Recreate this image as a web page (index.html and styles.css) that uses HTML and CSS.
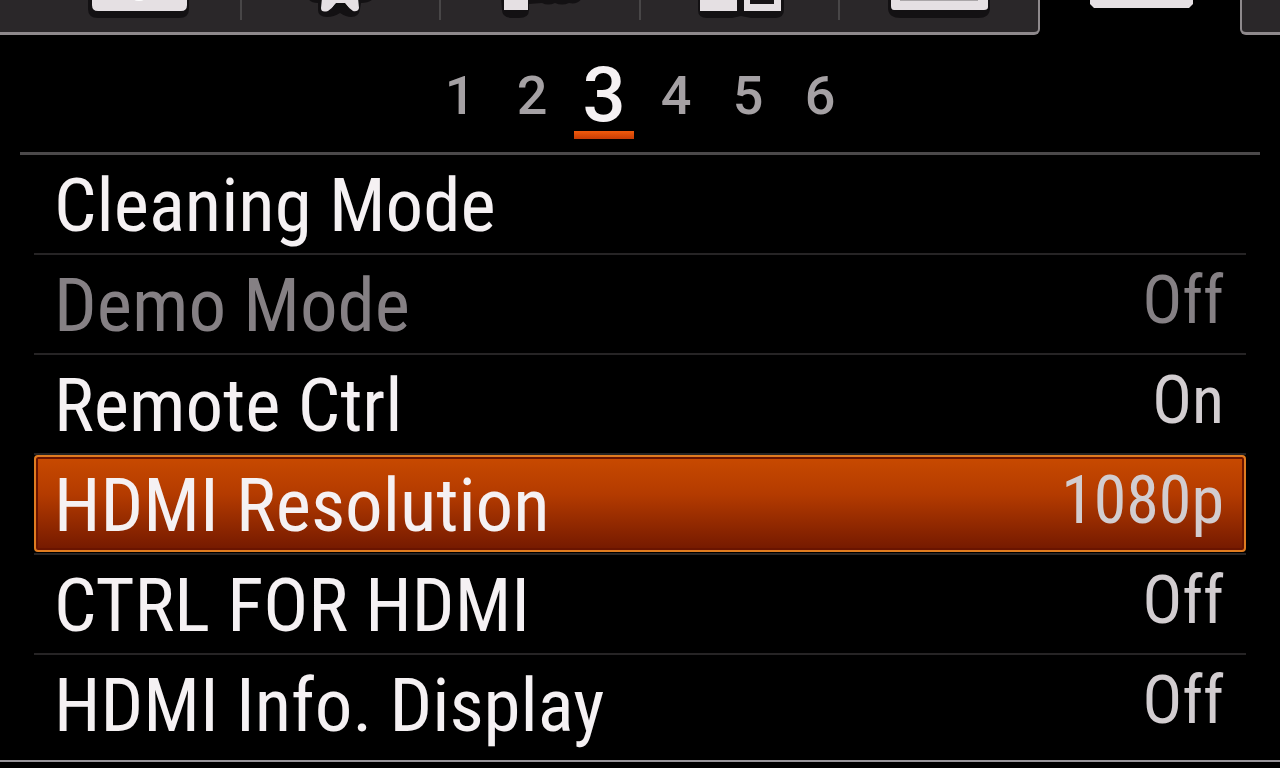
FILE: index.html
```html
<!DOCTYPE html>
<html lang="en">
<head>
<meta charset="utf-8">
<meta name="viewport" content="width=device-width, initial-scale=1">
<title>Setup Menu</title>
<link rel="stylesheet" href="styles.css">
</head>
<body>
<header class="tabs" aria-label="Menu categories">
  <div class="tabs-group tabs-before">
    <span class="tab-edge"></span>
    <button class="tab" aria-label="Camera"><svg class="icon" width="120" height="24" viewBox="0 0 120 24"><path class="shade" d="M8-5H109V9Q109 18 99 18H18Q8 18 8 9Z"/><path class="fill" d="M12-5H107V5Q107 11 101 11H18Q12 11 12 5Z"/><ellipse cx="59" cy="-1" rx="5" ry="2" fill="#fff"/></svg></button>
    <button class="tab" aria-label="Custom"><svg class="icon" width="120" height="24" viewBox="0 0 120 24"><path class="shade" d="M28-2H94Q90 3 81 3L80 9Q79 17 71 17 66 17 60 13 54 17 47 17 38 17 38 10L38 3Q30 3 28-2Z"/><path class="fill" d="M42-2H78L79 8Q78 12 73 11L68 7Q65 3 60 3 55 3 53 7L48 11Q41 13 41 8Z"/><path d="M56 3H65L69 8Q60 6 52 8Z" fill="#111"/></svg></button>
    <button class="tab" aria-label="Wireless"><svg class="icon" width="120" height="24" viewBox="0 0 120 24"><path class="shade" d="M21-2H102Q98 5 89 3 82 6 75 3 68 6 62 3L49 4V10Q49 18 39 18H33Q22 18 22 10Z"/><path class="fill" d="M24-2H48V10H24Z"/></svg></button>
    <button class="tab" aria-label="Application"><svg class="icon" width="120" height="24" viewBox="0 0 120 24"><path class="shade" d="M18-2H104V10Q104 17 96 18H71L61 16 52 18H27Q18 18 18 10Z"/><path class="fill" d="M20-2H57V11H20ZM64-2H101V11H64Z"/><path d="M70-2H94V4H70Z" fill="#171416"/></svg></button>
    <button class="tab" aria-label="Playback"><svg class="icon" width="120" height="24" viewBox="0 0 120 24"><path class="shade" d="M9-2H111V8Q111 18 99 18H22Q9 18 9 8Z"/><path class="fill" d="M12-2H109V7Q109 10 105 10H15Q12 10 12 6Z"/><path d="M21 0H99" stroke="#aaa6a8" stroke-width="2"/></svg></button>
  </div>
  <div class="tab-current">
    <button class="tab" aria-label="Setup" aria-current="true"><svg class="icon" width="120" height="24" viewBox="0 0 120 24"><path class="fill" d="M10-2H113V4L109 8H14L10 4Z"/></svg></button>
  </div>
  <div class="tabs-after"></div>
</header>
<nav class="pages" aria-label="Pages">
  <button class="page">1</button>
  <button class="page">2</button>
  <button class="page page-current" aria-current="page">3</button>
  <button class="page">4</button>
  <button class="page">5</button>
  <button class="page">6</button>
</nav>
<main class="menu">
  <ul class="list">
    <li class="item"><button class="row"><span class="name">Cleaning Mode</span></button></li>
    <li class="item"><button class="row" disabled><span class="name">Demo Mode</span><span class="value">Off</span></button></li>
    <li class="item"><button class="row"><span class="name">Remote Ctrl</span><span class="value">On</span></button></li>
    <li class="item"><button class="row row-selected"><span class="name">HDMI Resolution</span><span class="value">1080p</span></button></li>
    <li class="item"><button class="row"><span class="name">CTRL FOR HDMI</span><span class="value">Off</span></button></li>
    <li class="item"><button class="row"><span class="name">HDMI Info. Display</span><span class="value">Off</span></button></li>
  </ul>
</main>
</body>
</html>
```
FILE: styles.css
```css
* {
  box-sizing: border-box;
}

body {
  margin: 0;
  background: #000;
  color: #f5f1f3;
  font-family: "Liberation Sans Narrow", "Roboto Condensed", "Liberation Sans", sans-serif;
}

button {
  margin: 0;
  padding: 0;
  border: 0;
  background: none;
  color: inherit;
  font: inherit;
}

.tabs {
  display: grid;
  grid-template-columns: 26fr 5fr 1fr;
  height: 35px;
  overflow: hidden;
}

.tabs-group {
  display: grid;
  grid-template-columns: 1fr repeat(5, 5fr);
  border: solid #8e898c;
  border-width: 0 2px 3px 0;
  border-radius: 0 0 6px 0;
  background: #2a2729;
}

.tab {
  display: flex;
  justify-content: center;
  width: 100%;
  height: 20px;
}

.tabs-group .tab + .tab {
  border-left: 2px solid #484647;
}

.tabs-after {
  border: solid #8e898c;
  border-width: 0 0 3px 2px;
  border-radius: 0 0 0 6px;
  background: #2a2729;
}

.icon {
  flex: none;
}

.fill {
  fill: #e5e0e3;
}

.shade {
  fill: #131113;
}

.pages {
  display: flex;
  justify-content: center;
  height: 117px;
  padding-top: 25px;
  font-family: Roboto, "Liberation Sans", sans-serif;
  font-weight: 500;
}

.page {
  display: flex;
  flex-direction: column;
  align-items: center;
  width: 72px;
  height: 80px;
  color: #a5a1a4;
  font-size: 54px;
  line-height: 72px;
}

.page-current {
  color: #f5f1f3;
  font-size: 76px;
  line-height: 71px;
}

.page-current::after {
  content: "";
  flex: none;
  width: 60px;
  height: 8px;
  background: linear-gradient(#f05a0c, #c63c04);
}

.menu {
  padding: 0 34px 5px;
  border-bottom: 2px solid #97949a;
}

.menu::before {
  content: "";
  display: block;
  height: 3px;
  margin: 0 -14px;
  background: #4b494a;
}

.list {
  margin: 0;
  padding: 0;
  list-style: none;
}

.item {
  height: 100px;
  border-bottom: 2px solid #262425;
}

.item:last-child {
  border-bottom: 0;
}

.row {
  display: flex;
  justify-content: space-between;
  align-items: flex-start;
  width: 100%;
  height: 97px;
  padding: 0 20px 0 18px;
  border: 2px solid transparent;
  text-align: left;
  white-space: nowrap;
}

.row:disabled {
  color: #858084;
}

.name {
  font-size: 75px;
  line-height: 96px;
}

.value {
  color: #d2cdd0;
  font-size: 66px;
  line-height: 88px;
}

.row:disabled .value {
  color: #858084;
}

.row-selected {
  border-color: #e07c20;
  border-radius: 4px;
  background: linear-gradient(#c84a00, #b43b00 40%, #741900);
  box-shadow: inset 0 0 0 2px #6a1400;
}
```
